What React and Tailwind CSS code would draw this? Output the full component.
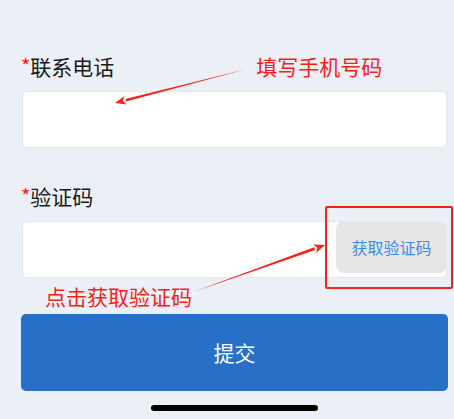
const font = { fontFamily: '"Noto Sans CJK SC", "Noto Sans", sans-serif' };

function Arrow({ x1, y1, x2, y2 }) {
  // tapered line from tail (x1,y1) to head (x2,y2)
  const dx = x2 - x1;
  const dy = y2 - y1;
  const len = Math.hypot(dx, dy);
  const ux = dx / len;
  const uy = dy / len;
  const px = -uy;
  const py = ux;
  const headLen = 11;
  const headW = 4.5;
  const bx = x2 - ux * headLen;
  const by = y2 - uy * headLen;
  const w = 1.4;
  const shaft = `M${x1},${y1} L${bx + px * w},${by + py * w} L${bx - px * w},${by - py * w} Z`;
  const head = `M${x2},${y2} L${bx + px * headW},${by + py * headW} L${bx + ux * 3},${by + uy * 3} L${bx - px * headW},${by - py * headW} Z`;
  return (
    <g fill="#f5221b">
      <path d={shaft} />
      <path d={head} />
    </g>
  );
}

export default function App() {
  return (
    <div className="relative h-[419px] w-[454px] overflow-hidden bg-[#ebf0f7]" style={font}>
      <div className="flex flex-col pl-[21px] pr-[7px] pt-[52px]">
        <div className="flex h-[28px] items-center">
          <span className="text-[20px] leading-none text-[#f5221b]">*</span>
          <span className="text-[21px] leading-none text-[#1a1a1a]">联系电话</span>
          <span className="ml-[142px] text-[21px] leading-none text-[#f5221b]">填写手机号码</span>
        </div>
        <div className="ml-px mt-[11px] h-[57px] rounded-[5px] border border-[#e4e7ec] bg-white" />

        <div className="mt-[34px] flex h-[28px] items-center">
          <span className="text-[20px] leading-none text-[#f5221b]">*</span>
          <span className="text-[21px] leading-none text-[#1a1a1a]">验证码</span>
        </div>
        <div className="relative ml-px mt-[11px] flex h-[57px] items-start justify-end rounded-[5px] border border-[#e4e7ec] bg-white">
          <button className="-mr-px -mt-px flex h-[52px] w-[111px] items-center justify-center rounded-[8px] bg-[#e6e6e6] text-[16px] text-[#3a8ee6]">
            获取验证码
          </button>
          <div className="absolute left-[302px] top-[-16px] h-[83px] w-[128px] rounded-[2px] border-2 border-[#f5221b]" />
        </div>

        <div className="flex h-[36px] items-center pl-[24px]">
          <span className="text-[21px] leading-none text-[#f5221b]">点击获取验证码</span>
        </div>

        <button className="flex h-[77px] w-[427px] items-center justify-center rounded-[5px] bg-[#286fc7] text-[21px] text-white">
          提交
        </button>

        <div className="mt-[14px] ml-[130px] h-[6px] w-[167px] rounded-full bg-black" />
      </div>

      <svg className="pointer-events-none absolute inset-0" width="454" height="419">
        <Arrow x1={247} y1={69} x2={115} y2={103} />
        <Arrow x1={193} y1={292} x2={325} y2={245} />
      </svg>
    </div>
  );
}
